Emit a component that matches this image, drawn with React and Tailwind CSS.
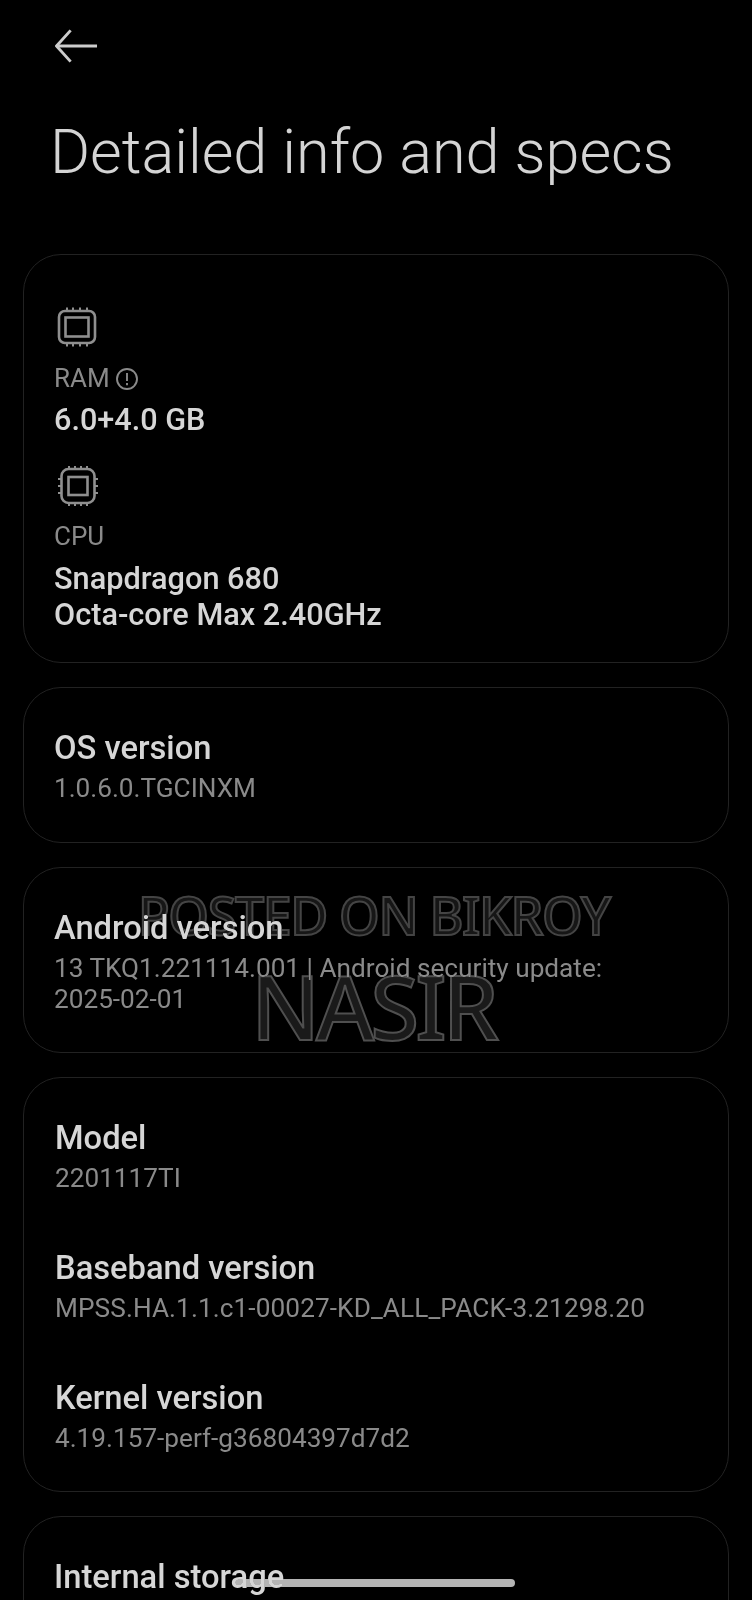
import React from "react";

const Chip1 = () => (
  <svg width="40" height="40" viewBox="0 0 40 40" fill="none" stroke="#8f8f8f" strokeWidth="2.6" className="block">
    <rect x="2" y="4" width="36" height="32" rx="6" />
    <rect x="8.5" y="10.5" width="23" height="19" />
    {[10, 16, 23, 30].map((x) => (
      <path key={x} d={`M${x} 0.5v4M${x} 35.5v4`} strokeWidth="2" />
    ))}
  </svg>
);

const Chip2 = () => (
  <svg width="40" height="40" viewBox="0 0 40 40" fill="none" stroke="#8f8f8f" strokeWidth="2.6" className="block">
    <rect x="3.5" y="3" width="33" height="34" rx="7" />
    <rect x="10.5" y="11" width="19" height="18" />
    {[11, 17, 23, 29].map((x) => (
      <path key={x} d={`M${x} 0v3M${x} 37v3`} strokeWidth="2" />
    ))}
    {[13, 20, 27].map((y) => (
      <path key={y} d={`M0 ${y}h4M36 ${y}h4`} strokeWidth="2" />
    ))}
  </svg>
);

const Item = ({ label, value, className = "" }) => (
  <div className={className}>
    <div className="text-[32.7px] leading-[38px] font-medium text-[#d6d6d6]">{label}</div>
    <div className="mt-[6px] text-[26.2px] leading-[31px] text-[#8a8a8a]">{value}</div>
  </div>
);

const cardClass = "mx-[23px] rounded-[38px] border border-[#222222]";

export default function App() {
  return (
    <div className="relative w-[752px] h-[1600px] overflow-hidden bg-black font-['Roboto',sans-serif]">
      <div className="pt-[27px] pl-[55px] h-[120px]">
        <svg width="43" height="38" viewBox="0 0 44 38" fill="none" stroke="#cccccc" strokeWidth="3" className="block">
          <path d="M1 19H43" />
          <path d="M16 3 1.5 19 16 35" />
        </svg>
      </div>
      <h1 className="pl-[50px] text-[61.2px] leading-[70px] font-light text-[#d4d4d4] mt-[-3px]">Detailed info and specs</h1>
      <div className="mt-[67px] flex flex-col gap-[24px]">
        <section className={`${cardClass} h-[409px] pt-[52px] pl-[30px]`}>
          <div className="pl-[3px]"><Chip1 /></div>
          <div className="mt-[16px] flex items-center gap-[5px] text-[26px] leading-[31px] text-[#8a8a8a]">
            RAM
            <svg width="24" height="24" viewBox="0 0 24 24" fill="none" stroke="#8a8a8a" strokeWidth="1.9">
              <circle cx="12" cy="12" r="10" />
              <path d="M12 6v8M12 16v2.2" />
            </svg>
          </div>
          <div className="mt-[8px] text-[30.6px] leading-[36px] font-medium text-[#d6d6d6]">6.0+4.0 GB</div>
          <div className="mt-[28px] pl-[4px]"><Chip2 /></div>
          <div className="mt-[15px] text-[26px] leading-[31px] text-[#8a8a8a]">CPU</div>
          <div className="mt-[9px] text-[30.7px] leading-[36px] font-medium text-[#d6d6d6]">
            Snapdragon 680<br />Octa-core Max 2.40GHz
          </div>
        </section>
        <section className={`${cardClass} h-[156px] pt-[41px] pl-[30px]`}>
          <Item label="OS version" value="1.0.6.0.TGCINXM" />
        </section>
        <section className={`${cardClass} h-[186px] pt-[41px] pl-[30px]`}>
          <Item label="Android version" value={<>13 TKQ1.221114.001 | Android security update:<br />2025-02-01</>} />
        </section>
        <section className={`${cardClass} h-[415px] pt-[41px] pl-[31px]`}>
          <Item label="Model" value="2201117TI" />
          <Item className="mt-[55px]" label="Baseband version" value={<span className="tracking-[0.1px]">MPSS.HA.1.1.c1-00027-KD_ALL_PACK-3.21298.20</span>} />
          <Item className="mt-[55px]" label="Kernel version" value="4.19.157-perf-g36804397d7d2" />
        </section>
        <section className={`${cardClass} h-[200px] pt-[41px] pl-[30px]`}>
          <Item label="Internal storage" value="" />
        </section>
      </div>

      <div className="absolute left-[138px] top-[880px] text-[52px] leading-[70px] font-medium tracking-[-1.4px] font-['Noto_Sans',sans-serif] text-[#161616] [-webkit-text-stroke:2px_#444444] whitespace-nowrap mix-blend-lighten">
        POSTED ON BIKROY
      </div>
      <div className="absolute left-[251px] top-[951px] text-[89px] leading-[110px] font-medium tracking-[-4px] font-['Noto_Sans',sans-serif] text-[#1a1a1a] [-webkit-text-stroke:2px_#4f4f4f] whitespace-nowrap mix-blend-lighten">
        NASIR
      </div>
      <div className="absolute left-[235px] top-[1579px] w-[280px] h-[8px] rounded-full bg-[#b4b4b4] mix-blend-lighten" />
    </div>
  );
}
